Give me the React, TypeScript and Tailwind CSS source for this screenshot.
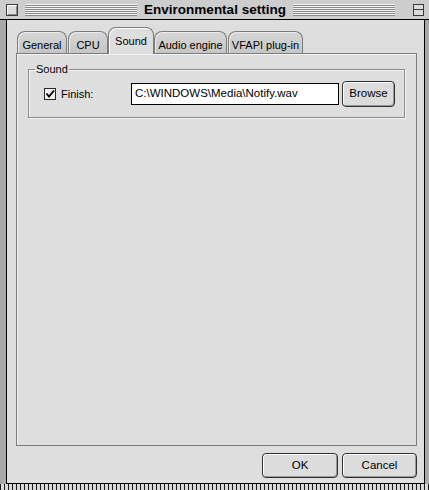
import React from "react";

// Platinum-style dialog: "Environmental setting"

const tabs = [
  { label: "General", w: "w-[50px]", ml: "ml-[1px]" },
  { label: "CPU", w: "w-[40px]", ml: "ml-[1px]" },
  { label: "Sound", w: "w-[46px]", ml: "ml-[0px]", active: true },
  { label: "Audio engine", w: "w-[73px]", ml: "ml-[0px]" },
  { label: "VFAPI plug-in", w: "w-[75px]", ml: "ml-[1px]" },
];

const stripes =
  "h-[12px] bg-[repeating-linear-gradient(to_bottom,#f2f2f2_0_1px,#8a8a8a_1px_2px)]";

function Tab({ label, w, ml, active }: { label: string; w: string; ml: string; active?: boolean }) {
  if (active) {
    return (
      <div
        className={`${w} ${ml} h-[27px] -mb-px relative z-10 rounded-t-[8px] border border-b-0 border-[#7c7c7c] bg-[#dedede] shadow-[inset_1px_1px_0_#ffffff] flex items-start justify-center pt-[5px] text-[11px]`}
      >
        {label}
      </div>
    );
  }
  return (
    <div
      className={`${w} ${ml} h-[22px] rounded-t-[8px] border border-b-0 border-[#7c7c7c] bg-[linear-gradient(to_bottom,#d6d6d6,#c6c6c6)] shadow-[inset_1px_1px_0_#ececec] flex items-start justify-center pt-[5px] text-[11px]`}
    >
      {label}
    </div>
  );
}

function PlatButton({ children, w, h }: { children: React.ReactNode; w: string; h: string }) {
  return (
    <button
      className={`${w} ${h} rounded-[4px] border border-[#303030] bg-[#dcdcdc] shadow-[inset_1px_1px_0_#ffffff,inset_-1px_-1px_0_#9a9a9a] text-[11.5px] flex items-center justify-center`}
    >
      {children}
    </button>
  );
}

export default function App() {
  return (
    <div className="relative w-[429px] h-[490px] overflow-hidden bg-[#a8a8a8] text-black font-['Liberation_Sans',Arial,sans-serif]">
      {/* Title bar */}
      <div className="h-[20px] flex items-center bg-[#cdcdcd] border-b border-black pl-[6px]">
        <div className="w-[12px] h-[12px] border border-[#3a3a3a] bg-[#dcdcdc] shadow-[inset_1px_1px_0_#ffffff,inset_-1px_-1px_0_#8a8a8a]" />
        <div className={`${stripes} ml-[7px] w-[112px]`} />
        <div className="w-[156px] text-center text-[13.5px] font-bold leading-none">Environmental setting</div>
        <div className={`${stripes} w-[102px]`} />
        <div className="ml-[18px] w-[11px] h-[12px] border border-[#3a3a3a] bg-[#dcdcdc] flex flex-col justify-center">
          <div className="h-px bg-[#3a3a3a]" />
        </div>
      </div>

      {/* Window body */}
      <div className="ml-[6px] w-[419px] h-[464px] border-l border-r border-b border-black bg-[#dedede] flex flex-col pt-[7px] pl-[9px] pr-[7px]">
        {/* Tabs */}
        <div className="h-[26px] flex items-end">
          {tabs.map((t) => (
            <Tab key={t.label} {...t} />
          ))}
        </div>

        {/* Panel */}
        <div className="h-[393px] border border-[#7c7c7c] bg-[#dedede] shadow-[inset_1px_1px_0_#f4f4f4] pl-[11px] pt-[10px]">
          <fieldset className="w-[377px] h-[54px] border border-[#8c8c8c] shadow-[1px_1px_0_#f6f6f6,inset_1px_1px_0_#f6f6f6] px-0">
            <legend className="ml-[6px] px-[1px] text-[11px] leading-[11px]">Sound</legend>
            <div className="flex items-center h-[38px] pl-[15px]">
              <svg width="12" height="12" viewBox="0 0 12 12" className="shrink-0">
                <rect x="0.5" y="0.5" width="11" height="11" fill="#f0f0f0" stroke="#2a2a2a" />
                <path d="M2.5 5.5 L5 8.5 L10 2.5" fill="none" stroke="#000" strokeWidth="1.8" />
              </svg>
              <span className="ml-[5px] w-[70px] text-[11px]">Finish:</span>
              <div className="w-[208px] h-[22px] border border-black bg-white flex items-center pl-[3px] text-[11.5px]">
                C:\WINDOWS\Media\Notify.wav
              </div>
              <div className="ml-[3px]">
                <PlatButton w="w-[53px]" h="h-[26px]">Browse</PlatButton>
              </div>
            </div>
          </fieldset>
        </div>

        {/* Footer buttons */}
        <div className="mt-[7px] flex justify-end gap-[4px]">
          <PlatButton w="w-[76px]" h="h-[25px]">OK</PlatButton>
          <PlatButton w="w-[75px]" h="h-[25px]">Cancel</PlatButton>
        </div>
      </div>

      {/* strip of the window underneath */}
      <div className="h-[6px] bg-[repeating-linear-gradient(90deg,#1a1a1a_0_1px,#d8d8d8_1px_4px)]" />
    </div>
  );
}
